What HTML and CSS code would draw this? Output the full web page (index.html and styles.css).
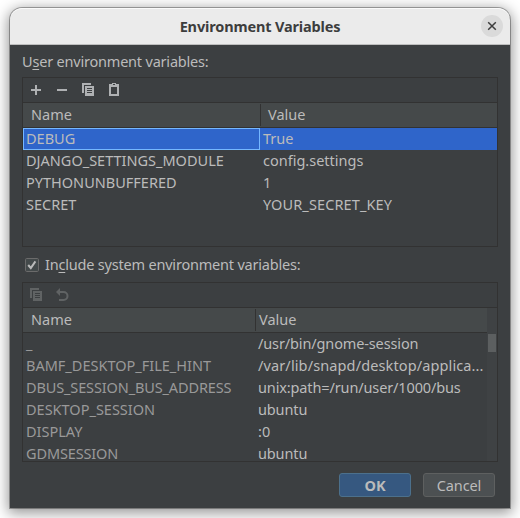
FILE: index.html
```html
<!DOCTYPE html>
<html lang="en">
<head>
<meta charset="utf-8">
<title>Environment Variables</title>
<link rel="stylesheet" href="styles.css">
</head>
<body>
<main class="window">
  <header class="titlebar">
    <h1>Environment Variables</h1>
    <button class="close" aria-label="Close"><svg width="22" height="22" viewBox="0 0 22 22"><path d="M7.2 7.2l7.6 7.6M14.8 7.2l-7.6 7.6" stroke="#3d3d3d" stroke-width="1.5"/></svg></button>
  </header>
  <div class="content">
    <p class="label">U<u>s</u>er environment variables:</p>
    <section class="panel user">
      <div class="toolbar">
        <svg width="16" height="16" viewBox="0 0 16 16"><path d="M3 7h4V3h2v4h4v2H9v4H7V9H3z"/></svg>
        <svg width="16" height="16" viewBox="0 0 16 16"><path d="M3 7h10v2H3z"/></svg>
        <svg width="16" height="16" viewBox="0 0 16 16"><path fill-rule="evenodd" d="M2 1h9v2H4v8H2zM5 4h9v10H5zM7 6v1h5V6zM7 8v1h5V8zM7 10v1h5v-1z"/></svg>
        <svg width="16" height="16" viewBox="0 0 16 16"><path fill-rule="evenodd" d="M3 2h3V1h4v1h3v12H3zM5 5v7h6V5zM7 2v1h2V2z"/></svg>
      </div>
      <div class="row head"><span>Name</span><span>Value</span></div>
      <div class="row selected"><span>DEBUG</span><span>True</span></div>
      <div class="row"><span>DJANGO_SETTINGS_MODULE</span><span>config.settings</span></div>
      <div class="row"><span>PYTHONUNBUFFERED</span><span>1</span></div>
      <div class="row"><span>SECRET</span><span class="wide">YOUR_SECRET_KEY</span></div>
    </section>
    <div class="check">
      <svg width="14" height="14" viewBox="0 0 14 14"><rect x=".5" y=".5" width="13" height="13" rx="1.2" fill="#43494a" stroke="#6b6b6b"/><path d="M3.2 7l2.6 3L10.4 3.4" fill="none" stroke="#bbb" stroke-width="2"/></svg>
      <span>In<u>c</u>lude system environment variables:</span>
    </div>
    <section class="panel system">
      <div class="toolbar disabled">
        <svg width="16" height="16" viewBox="0 0 16 16"><path fill-rule="evenodd" d="M2 1h9v2H4v8H2zM5 4h9v10H5zM7 6v1h5V6zM7 8v1h5V8zM7 10v1h5v-1z"/></svg>
        <svg width="16" height="16" viewBox="0 0 16 16"><path d="M2 5l4-4v3h3.5a4.8 4.8 0 0 1 0 10H5v-2h4.5a2.9 2.9 0 0 0 0-6H6v3z"/></svg>
      </div>
      <div class="body">
        <div class="table">
          <div class="row head"><span>Name</span><span>Value</span></div>
          <div class="row"><span>_</span><span class="tight">/usr/bin/gnome-session</span></div>
          <div class="row"><span>BAMF_DESKTOP_FILE_HINT</span><span class="wide">/var/lib/snapd/desktop/applica...</span></div>
          <div class="row"><span class="tight">DBUS_SESSION_BUS_ADDRESS</span><span class="tight">unix:path=/run/user/1000/bus</span></div>
          <div class="row"><span>DESKTOP_SESSION</span><span class="tight">ubuntu</span></div>
          <div class="row"><span>DISPLAY</span><span>:0</span></div>
          <div class="row"><span class="tight">GDMSESSION</span><span class="tight">ubuntu</span></div>
        </div>
        <div class="track"><div class="thumb"></div></div>
      </div>
    </section>
    <footer><button class="btn ok">OK</button><button class="btn">Cancel</button></footer>
  </div>
</main>
</body>
</html>
```
FILE: styles.css
```css
* { box-sizing: border-box; }
body {
  margin: 0; width: 520px; height: 518px; padding: 8px 10px 10px;
  overflow: hidden; background: #fff;
  font: 14.5px/22px "Noto Sans", "Open Sans", sans-serif; color: #bbb;
}
svg { display: block; flex: none; }
.window {
  height: 500px; border-radius: 12px 12px 0 0; background: #3c3f41;
  box-shadow: 0 0 0 1px rgba(0,0,0,.3), 0 3px 14px 2px rgba(0,0,0,.42);
}
.titlebar {
  height: 37px; border-radius: 12px 12px 0 0; background: #ebebeb;
  border-bottom: 1px solid #bebebe; box-shadow: inset 0 1px #fafafa;
  display: grid; grid-template-columns: 1fr auto 1fr; align-items: center;
}
h1 { grid-column: 2; margin: 0; font-size: 14.5px; line-height: 22px; font-weight: 700; color: #3d3d3d; letter-spacing: -.15px; }
.close { justify-self: end; margin-right: 7px; width: 22px; height: 22px; padding: 0; border: 0; border-radius: 50%; background: #dadada; }
.content { padding: 6px 12px 0; }
.label { margin: 0; height: 26px; line-height: 20px; letter-spacing: -.2px; }
u { text-underline-offset: 2px; text-decoration-thickness: 1px; }
.panel { border: 1px solid #323232; overflow: hidden; }
.user { height: 170px; }
.system { height: 180px; }
.toolbar { height: 25px; border-bottom: 1px solid #323232; display: flex; align-items: center; gap: 10px; padding: 0 5px; fill: #afb1b3; }
.disabled { fill: #606364; }
.row { height: 22px; display: grid; grid-template-columns: 237px 1fr; line-height: 20px; white-space: nowrap; }
.row > span { padding-left: 3px; }
.row > span + span { padding-left: 3px; }
.head { height: 25px; background: #45494a; border-bottom: 1px solid #323232; line-height: 23px; }
.head > span { padding-left: 8px; }
.head > span + span { margin: 1px 0; border-left: 1px solid #323232; padding-left: 7px; line-height: 21px; }
.selected { background: #2f65ca; }
.selected > span:first-child { border: 1px solid #75b7ff; line-height: 18px; padding-left: 2px; }
.check { height: 35px; display: flex; align-items: center; gap: 6px; padding-left: 3px; letter-spacing: -.2px; }
.check span { line-height: 20px; margin-top: -2px; }
.tight { letter-spacing: -.13px; }
.wide { letter-spacing: .12px; }
.body { display: grid; grid-template-columns: 1fr 10px; }
.system .row { grid-template-columns: 232px 1fr; }
.system .row > span + span { padding-left: 3px; }
.system .row:not(.head) > span:first-child { color: #999; }
.track { background: #3f4244; padding: 26px 1px 0; }
.thumb { height: 18px; background: #5c5f60; }
footer { display: flex; justify-content: flex-end; gap: 12px; padding: 11px 3px 0; }
.btn { width: 72px; height: 24px; padding: 0; border: 1px solid #5e6060; border-radius: 3px; background: #4c5052; font: inherit; line-height: 20px; color: #bbb; letter-spacing: -.1px; }
.ok { background: #365880; border-color: #4c708c; font-weight: 700; }
```
